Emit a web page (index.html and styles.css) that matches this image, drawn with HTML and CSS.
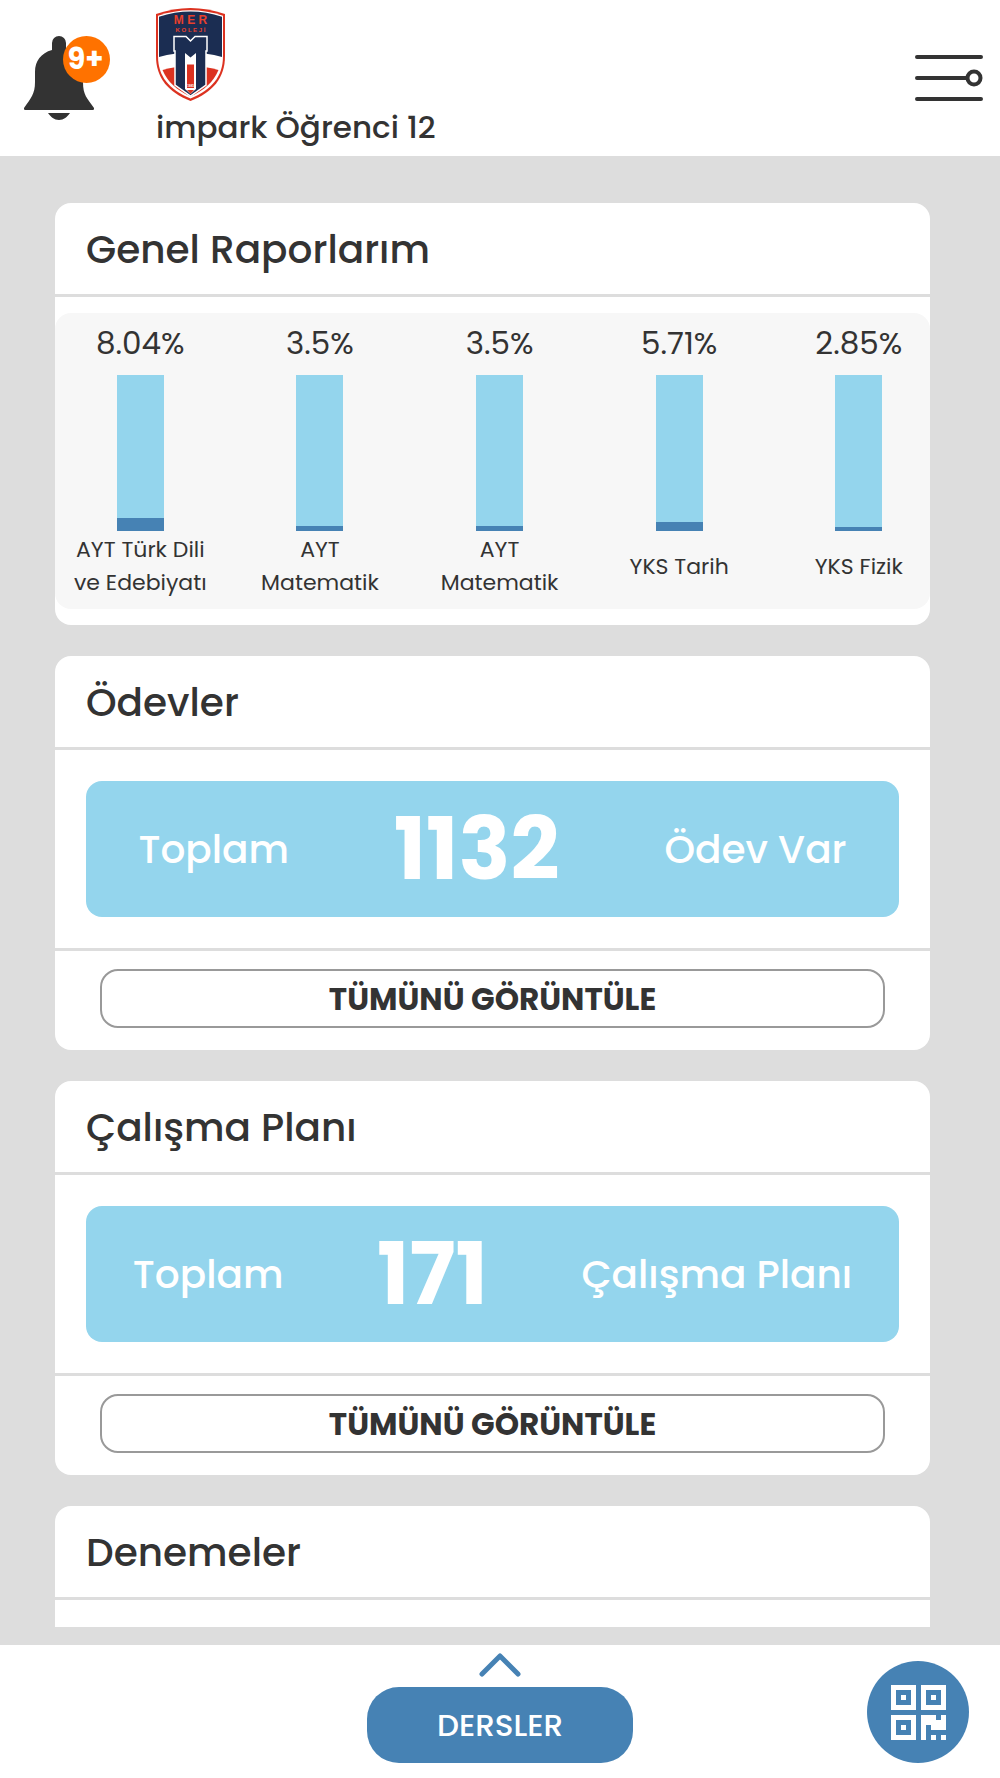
FILE: index.html
```html
<!DOCTYPE html>
<html lang="tr">
<head>
    <meta charset="UTF-8">
    <meta name="viewport" content="width=device-width, initial-scale=1.0">
    <title>Genel Raporlarım</title>
    <link rel="stylesheet" href="styles.css">
</head>
<body>
    <header class="topbar">
        <button type="button" class="icon-btn bell" aria-label="Bildirimler">
            <svg width="70" height="84" viewBox="0 0 70 84" aria-hidden="true">
                <path fill="#333" d="M28 7a7 7 0 0 1 14 0v7c11 3 17 11 17 22v10c0 13 4 16 11 26 0 1 0 2-1 2H1c-1 0-1-1-1-2 7-10 11-14 11-26V36c0-11 6-19 17-22zM24 77h22c-3 4-6 7-11 7s-8-3-11-7z"/>
            </svg>
            <span class="badge">9+</span>
        </button>
        <div class="profile">
            <svg class="logo" width="69" height="93" viewBox="156 8 69 93" aria-hidden="true">
                <path fill="#dc3220" d="M156 14q34.500-12 69 0v42c0 22-12 36-34.500 45C168 92 156 78 156 56z"/>
                <path fill="#fff" d="M158 15.800q32.500-11 65 0V56c0 20.500-11 33.500-32.500 42.500C169 89.500 158 76.500 158 56z"/>
                <path fill="#1b2d52" d="M159 16.700q31.500-10.500 63 0V57q-31.500-9-63 0z"/>
                <path fill="#dc3220" d="M162.500 70q28-8 56 0c-5 12-14 20-28 26.500-14-6.500-23-14.500-28-26.500z"/>
                <path fill="#1b2d52" stroke="#fff" stroke-width="1.500" d="M174 36.500h12l4.500 4.500 4.500-4.500h12V51h-1v34l-15.500 11L175 85V51h-1z"/>
                <path fill="#fff" d="M185 53l5.500 4.500L196 53v36l-5.500 5-5.500-5z"/>
                <path fill="#dc3220" d="M187 64.500h7V88h-7zM187 90h7l-3.500 4z"/>
                <text class="logo-text" x="190.500" y="24" font-size="12">M E R</text>
                <text class="logo-text" x="190.500" y="32" font-size="6">K O L E J İ</text>
                <text class="logo-year" x="190.500" y="87" font-size="3">1985</text>
            </svg>
            <span class="profile-name">impark Öğrenci 12</span>
        </div>
        <button type="button" class="icon-btn menu" aria-label="Menü">
            <svg width="70" height="50" viewBox="0 0 70 50" fill="none" stroke="#333" stroke-width="4" stroke-linecap="round" aria-hidden="true">
                <path d="M3 4h64M3 25h50M3 46h64"/>
                <circle cx="60" cy="25" r="6.500"/>
            </svg>
        </button>
    </header>

    <main class="content">
        <div class="cards">
            <section class="card">
                <h2>Genel Raporlarım</h2>
                <div class="card-body">
                    <ul class="chart">
                        <li><span class="percent">8.04%</span><div class="bar"><div class="fill" style="height: 8.04%"></div></div><span class="lesson">AYT Türk Dili ve Edebiyatı</span></li>
                        <li><span class="percent">3.5%</span><div class="bar"><div class="fill" style="height: 3.5%"></div></div><span class="lesson">AYT Matematik</span></li>
                        <li><span class="percent">3.5%</span><div class="bar"><div class="fill" style="height: 3.5%"></div></div><span class="lesson">AYT Matematik</span></li>
                        <li><span class="percent">5.71%</span><div class="bar"><div class="fill" style="height: 5.71%"></div></div><span class="lesson">YKS Tarih</span></li>
                        <li><span class="percent">2.85%</span><div class="bar"><div class="fill" style="height: 2.85%"></div></div><span class="lesson">YKS Fizik</span></li>
                    </ul>
                </div>
            </section>

            <section class="card">
                <h2>Ödevler</h2>
                <div class="total">
                    <span>Toplam</span>
                    <strong>1132</strong>
                    <span>Ödev Var</span>
                </div>
                <div class="card-footer">
                    <button type="button" class="view-all">TÜMÜNÜ GÖRÜNTÜLE</button>
                </div>
            </section>

            <section class="card">
                <h2>Çalışma Planı</h2>
                <div class="total">
                    <span>Toplam</span>
                    <strong>171</strong>
                    <span>Çalışma Planı</span>
                </div>
                <div class="card-footer">
                    <button type="button" class="view-all">TÜMÜNÜ GÖRÜNTÜLE</button>
                </div>
            </section>

            <section class="card card-last">
                <h2>Denemeler</h2>
            </section>
        </div>
    </main>

    <footer class="bottombar">
        <div class="lessons">
            <svg width="42" height="26" viewBox="0 0 42 26" fill="none" stroke="#4682b4" stroke-width="5" stroke-linecap="round" stroke-linejoin="round" aria-hidden="true">
                <path d="M3 22L21 4l18 18"/>
            </svg>
            <button type="button" class="lessons-btn">DERSLER</button>
        </div>
        <button type="button" class="qr-btn" aria-label="QR kod">
            <svg width="55" height="55" viewBox="0 0 11 11" fill="#fff" shape-rendering="crispEdges" aria-hidden="true">
                <path fill-rule="evenodd" d="M0 0h5v5H0zM1 1v3h3V1zM2 2h1v1H2zM6 0h5v5H6zM7 1v3h3V1zM8 2h1v1H8zM0 6h5v5H0zM1 7v3h3V7zM2 8h1v1H2z"/>
                <path d="M6 6h3v1h1V6h1v3H8V8H7v3H6zM8 10h1v1H8zM10 10h1v1h-1z"/>
            </svg>
        </button>
    </footer>
</body>
</html>
```

FILE: styles.css
```css
* {
    box-sizing: border-box;
}
body {
    display: flex;
    flex-direction: column;
    height: 100vh;
    margin: 0;
    font-family: Poppins, Inter, sans-serif;
    color: #333;
    background-color: #fff;
}
button {
    font-family: inherit;
    color: inherit;
    cursor: pointer;
}
svg {
    display: block;
}
.topbar {
    display: flex;
    align-items: center;
    padding: 8px 16px 8px 24px;
}
.icon-btn {
    position: relative;
    padding: 0;
    border: none;
    background: none;
}
.badge {
    position: absolute;
    top: 0;
    left: 39px;
    width: 47px;
    padding-right: 2px;
    line-height: 47px;
    border-radius: 50%;
    background-color: #ff7200;
    color: #fff;
    font-size: 29px;
    font-weight: 700;
}
.profile {
    flex: 1;
    margin-left: 62px;
}
.profile-name {
    display: block;
    margin-top: 5px;
    font-size: 31px;
    font-weight: 500;
    line-height: 42px;
}
.logo-text, .logo-year {
    fill: #e8402c;
    font-family: "Liberation Sans", Arial, sans-serif;
    font-weight: 700;
    text-anchor: middle;
}
.logo-year {
    fill: #fff;
}
.content {
    flex: 1;
    min-height: 0;
    padding: 47px 70px 18px 55px;
    background-color: #ddd;
}
.cards {
    display: flex;
    flex-direction: column;
    gap: 31px;
    height: 100%;
    overflow: hidden;
}
.card {
    flex-shrink: 0;
    border-radius: 16px;
    background-color: #fff;
}
.card h2 {
    margin: 0;
    padding: 17px 31px 14px;
    border-bottom: 3px solid #ddd;
    font-size: 39px;
    font-weight: 500;
    line-height: 60px;
}
.card-body {
    padding: 16px 0;
}
.card-last {
    padding-bottom: 60px;
}
.chart {
    display: flex;
    gap: 9px;
    margin: 0;
    padding: 8px 0;
    border-radius: 16px;
    background-color: #f7f7f7;
    list-style: none;
    overflow: hidden;
}
.chart li {
    display: flex;
    flex: 0 0 19.5%;
    flex-direction: column;
    align-items: center;
    text-align: center;
}
.percent {
    margin-bottom: 10px;
    font-size: 31px;
    line-height: 44px;
}
.bar {
    display: flex;
    align-items: flex-end;
    width: 47px;
    height: 156px;
    background-color: #94d5ed;
}
.fill {
    width: 100%;
    background-color: #4682b4;
}
.lesson {
    display: flex;
    align-items: center;
    justify-content: center;
    width: 140px;
    height: 70px;
    font-size: 22px;
    line-height: 33px;
}
.total {
    display: flex;
    align-items: center;
    justify-content: space-around;
    margin: 31px;
    padding: 18px 0;
    border-radius: 16px;
    background-color: #94d5ed;
    color: #fff;
    font-size: 39px;
    font-weight: 500;
}
.total strong {
    font-size: 86px;
    font-weight: 700;
    line-height: 100px;
}
.card-footer {
    padding: 18px 45px 22px;
    border-top: 3px solid #ddd;
}
.view-all {
    display: block;
    width: 100%;
    padding: 1px 0 0;
    border: 2px solid #999;
    border-radius: 18px;
    background-color: #fff;
    font-size: 31px;
    font-weight: 700;
    line-height: 54px;
}
.bottombar {
    display: grid;
    grid-template-columns: 1fr auto 1fr;
    align-items: end;
    padding: 7px 31px 15px;
}
.lessons {
    display: flex;
    grid-column: 2;
    flex-direction: column;
    align-items: center;
    gap: 9px;
}
.lessons-btn {
    padding: 0 70px;
    border: none;
    border-radius: 32px;
    background-color: #4682b4;
    color: #fff;
    font-size: 31px;
    font-weight: 500;
    line-height: 76px;
}
.qr-btn {
    display: flex;
    align-items: center;
    justify-content: center;
    justify-self: end;
    width: 102px;
    height: 102px;
    padding: 0;
    border: none;
    border-radius: 50%;
    background-color: #4682b4;
}
```
